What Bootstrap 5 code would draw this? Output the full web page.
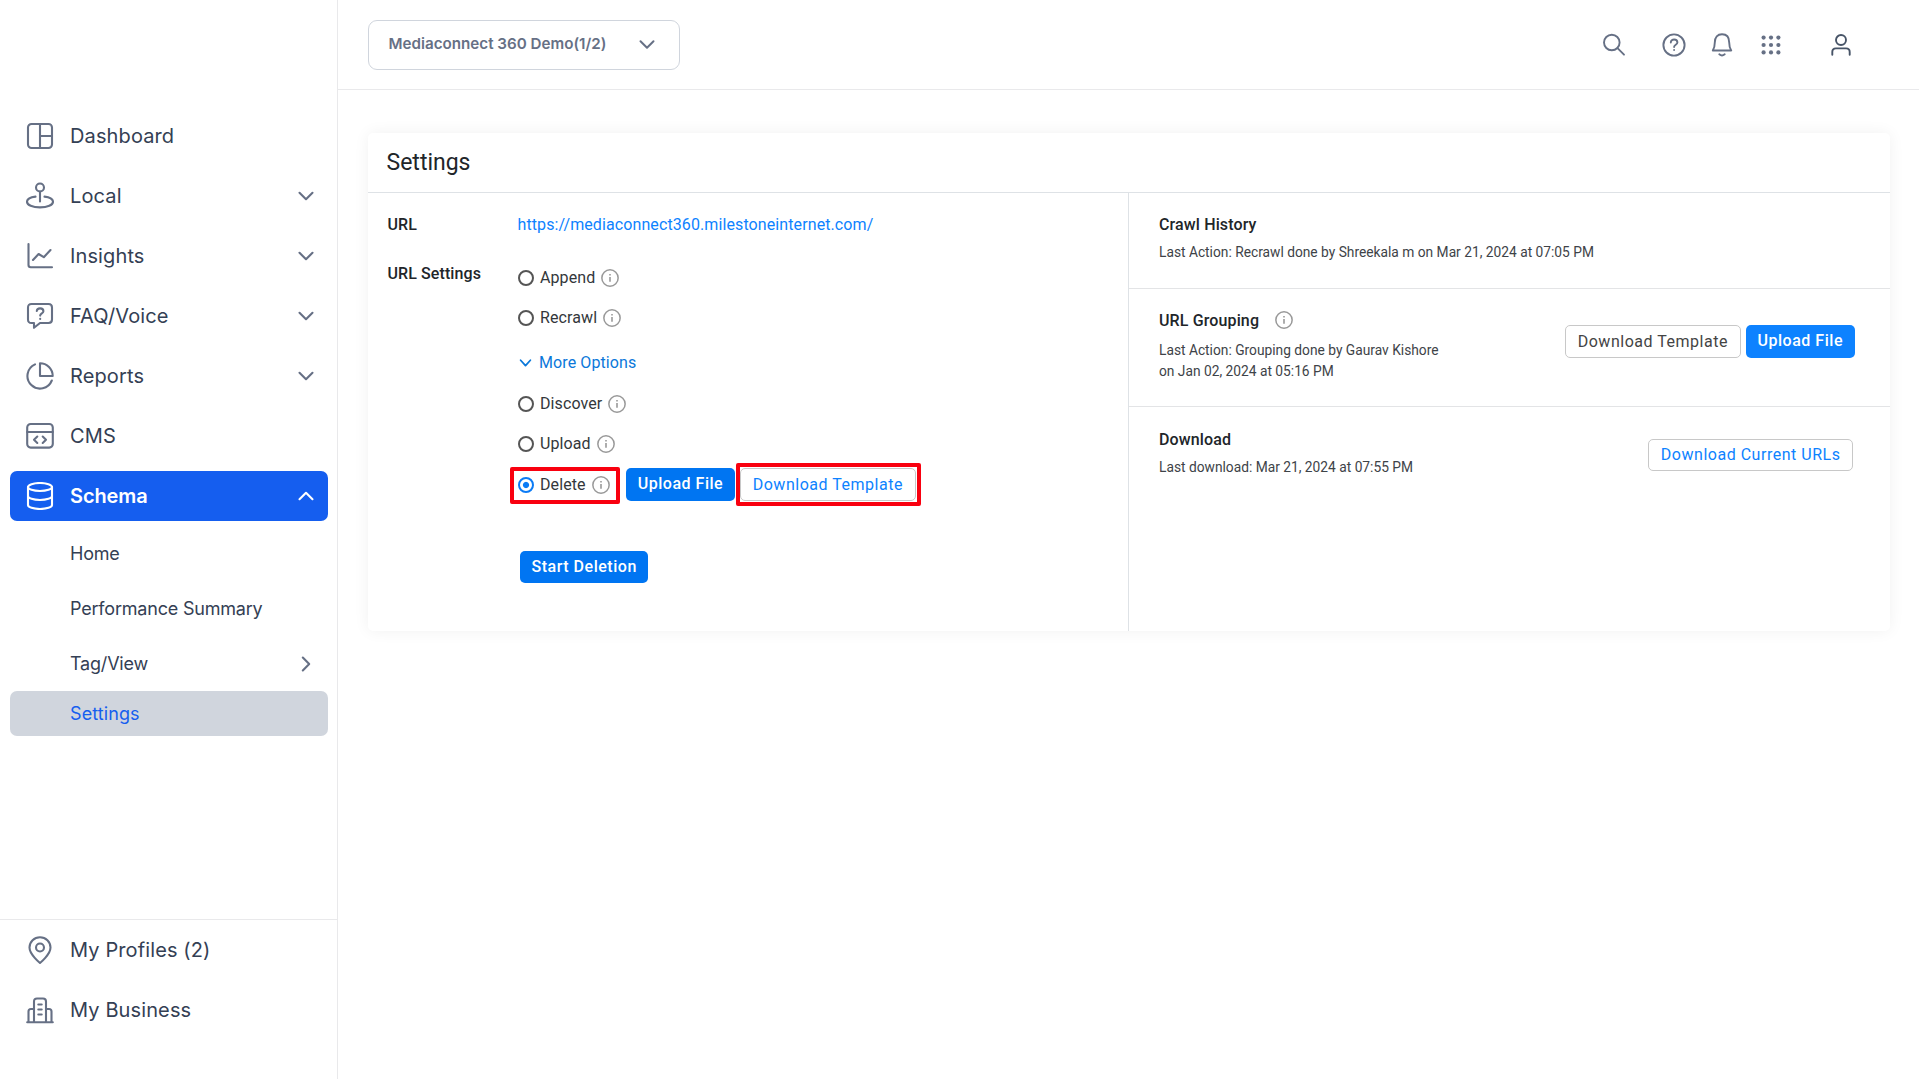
<!DOCTYPE html>
<html lang="en">
<head>
<meta charset="utf-8">
<title>Settings</title>
<link href="https://cdn.jsdelivr.net/npm/bootstrap@5.3.0/dist/css/bootstrap.min.css" rel="stylesheet">
<style>
body{height:1079px;overflow:hidden;background:#fff;font-family:Roboto,"Liberation Sans",sans-serif;color:#212529}
svg{display:block;flex:none;fill:none;stroke:currentColor;stroke-linecap:round;stroke-linejoin:round}
.side-panel{width:338px;border-right:1px solid #e9e9eb;font-family:Inter,"Liberation Sans",sans-serif}
.side-main{padding:111px 9px 0 10px;flex:1}
.side-link,.side-sub{display:flex;align-items:center;margin-bottom:10px;border-radius:7px;color:#344054;text-decoration:none;white-space:nowrap}
.side-link{height:50px;padding:0 14.500px 0 16px;font-size:20px;letter-spacing:.12px}
.side-link span{margin-left:16px;flex:1}
.side-link svg,.side-sub svg{color:#667085;stroke-width:2.1}
.side-link.active{background:#155eef;color:#fff;font-weight:600;letter-spacing:-.1px}
.side-link.active svg{color:#fff}
.side-sub{height:45px;padding:0 14.500px 0 60px;font-size:18px;letter-spacing:-.2px}
.side-sub span{flex:1}
.side-sub.active{background:#d0d5dd;color:#155eef;margin-top:-5px;letter-spacing:.1px}
.side-foot{height:160px;border-top:1px solid #e9e9eb;padding:5px 9px 0 10px}
.top-bar{height:90px;border-bottom:1px solid #e9e9eb;padding:0 66.500px 0 30px}
.picker{width:312px;height:50px;border:1px solid #d0d5dd;border-radius:9px;padding:0 20px 2px 19.500px;font:600 15.2px Inter,"Liberation Sans",sans-serif;color:#667085;background:#fff}
.top-icons{color:#667085}
.top-icons svg{width:24px;height:24px;stroke-width:1.9}
.icon-search{margin-right:36px}
.icon-bell{margin:0 25px 0 24px}
.icon-user{margin-left:46px;color:#475467}
.panel-card{margin:43px 29px 0 30px;height:498px;border-radius:5px;background:#fff;box-shadow:0 0 16px rgba(0,0,0,.06)}
.panel-head{height:60px;border-bottom:1px solid #dee2e6;padding:0 18.500px;font-size:23px;line-height:59px}
.panel-left{width:761px;border-right:1px solid #dee2e6;padding:20px 0 0 19.500px;font-size:16px;line-height:24px;letter-spacing:.1px}
.panel-right{width:761px}
.field-name{width:130px;font-weight:500}
.field-settings{margin-top:25px}
.opt-list{padding-top:4px}
.opt-row{height:24px;margin-bottom:16px;display:flex;align-items:center;color:#33373b;white-space:nowrap}
.opt-row input{appearance:none;width:16px;height:16px;border:2px solid #555;border-radius:50%;margin:0 6px 0 .5px}
.opt-row input:checked{border-color:#0b7bf5;background:radial-gradient(circle,#0b7bf5 0 2.600px,#fff 3.600px)}
.opt-more{margin:21px 0 17px;padding-left:1.500px;color:#0b78da;text-decoration:none;letter-spacing:.1px}
.opt-more svg{margin-right:7px}
.opt-delete{height:33px;margin:-4px 0 50px}
.info-dot{width:18px;height:18px;color:#999}
.opt-row .info-dot{margin-left:6px}
.blue-link{color:#0d82ff;text-decoration:none}
.act{height:33px;border-radius:5px;padding:0 11.500px;font-size:16px;line-height:31px;border:0;letter-spacing:.52px;white-space:nowrap;flex:none}
.act-fill{background:#0d82ff;color:#fff;font-weight:500;padding:0 12px 2px;line-height:29px}
.act-deep{background:#0075f2}
.act-line{border:1px solid #c8c8c8;background:#fff;color:#444}
.act-line.is-blue{color:#0d82ff}
.act-start{height:32px;margin-left:2.500px;padding:0 11.500px 2px}
.act-current{height:32px;margin:11px 2px 0 0;line-height:30px}
.act-pair{gap:5px}
.callout{position:relative}
.callout::after{content:"";position:absolute;border:4px solid #f9000f;border-radius:2px;pointer-events:none}
.callout-a::after{inset:-6px -10px -7px -8px}
.callout-b{margin-left:5px}
.callout-b::after{inset:-5px -5px -5px -4px}
.panel-sec{padding:20px 35px 0 30px}
.panel-sec + .panel-sec{border-top:1px solid #e3e4e6}
.sec-history{height:95px}
.sec-group{height:118px}
.sec-download{padding-top:21px}
.sec-name{font-weight:500;font-size:16px;line-height:24px;letter-spacing:.13px;white-space:nowrap}
.sec-name .info-dot{margin:-2px 0 0 16px}
.sec-note{font-size:13.770px;line-height:21px;margin-top:5px;color:#3e4348;white-space:nowrap}
.sec-group .sec-note{margin-top:7px}
</style>
<script src="https://cdn.jsdelivr.net/npm/bootstrap@5.3.0/dist/js/bootstrap.bundle.min.js"></script>
</head>
<body class="d-flex">
<svg width="0" height="0" class="position-absolute">
<symbol id="info" viewBox="0 0 18 18"><circle cx="9" cy="9" r="8.150" stroke-width="1.500"/><path d="M9 8v4.800M9 5v1.600" stroke-width="1.600" stroke-linecap="butt"/></symbol>
<symbol id="down" viewBox="0 0 16 16"><path d="M1.500 4.800 8 11.200l6.500-6.400"/></symbol>
</svg>
<nav class="side-panel d-flex flex-column flex-shrink-0">
<div class="side-main">
<a class="side-link" href="#"><svg width="28" height="28" viewBox="0 0 28 28"><rect x="2" y="2" width="24" height="24" rx="3.500"/><path d="M14 2v24M14 14h12"/></svg><span>Dashboard</span></a>
<a class="side-link" href="#"><svg width="28" height="28" viewBox="0 0 28 28"><circle cx="14" cy="5.500" r="4"/><path d="M14 9.500v10M9.500 14.600C4 15.300 1 17.200 1 19.800 1 23 6.500 25.400 14 25.400S27 23 27 19.800c0-2.600-3-4.500-8.500-5.200"/></svg><span>Local</span><svg width="16" height="16"><use href="#down"/></svg></a>
<a class="side-link" href="#"><svg width="28" height="28" viewBox="0 0 28 28"><path d="M2.500 2v21q0 2.200 2.200 2.200H26M7 18l5.600-6 5.200 3.200L24.500 8"/></svg><span>Insights</span><svg width="16" height="16"><use href="#down"/></svg></a>
<a class="side-link" href="#"><svg width="28" height="28" viewBox="0 0 28 28"><path d="M5.500 2h17Q26 2 26 5.500v12q0 3.500-3.500 3.500H14l-6 4.800V21H5.500Q2 21 2 17.500v-12Q2 2 5.500 2Z"/><path d="M10.800 9c.3-3.600 6.600-3.400 6.600.2 0 2.200-3.200 2.300-3.200 4.400M14.200 16.800v.1"/></svg><span>FAQ/Voice</span><svg width="16" height="16"><use href="#down"/></svg></a>
<a class="side-link" href="#"><svg width="28" height="28" viewBox="0 0 28 28"><path d="M14 1.300V14h12.700A12.700 12.700 0 0 0 14 1.300ZM9 2.400A12.600 12.600 0 1 0 25.800 18.500"/></svg><span>Reports</span><svg width="16" height="16"><use href="#down"/></svg></a>
<a class="side-link" href="#"><svg width="28" height="28" viewBox="0 0 28 28"><rect x="1.200" y="2" width="25.600" height="23.600" rx="3.500"/><path d="M1.200 10h25.600M11.300 14.500 8 17.700l3.300 3.200M16.700 14.500l3.300 3.200-3.300 3.200"/></svg><span>CMS</span></a>
<a class="side-link active" href="#"><svg width="28" height="28" viewBox="0 0 28 28"><ellipse cx="14" cy="5" rx="12" ry="4"/><path d="M2 5v18c0 2.200 5.400 4 12 4s12-1.800 12-4V5M2 14c0 2.200 5.400 4 12 4s12-1.800 12-4"/></svg><span>Schema</span><svg width="16" height="16" viewBox="0 0 16 16"><path d="M1.500 11.200 8 4.800l6.500 6.400"/></svg></a>
<a class="side-sub" href="#"><span>Home</span></a>
<a class="side-sub" href="#"><span>Performance Summary</span></a>
<a class="side-sub" href="#"><span>Tag/View</span><svg width="16" height="16" viewBox="0 0 16 16"><path d="M4.800 1.500 11.200 8l-6.400 6.500"/></svg></a>
<a class="side-sub active" href="#"><span>Settings</span></a>
</div>
<div class="side-foot">
<a class="side-link" href="#"><svg width="28" height="28" viewBox="0 0 28 28"><path d="M14 27S3.500 18.500 3.500 11.500a10.500 10.300 0 0 1 21 0C24.500 18.500 14 27 14 27Z"/><circle cx="14" cy="11.500" r="4"/></svg><span>My Profiles (2)</span></a>
<a class="side-link" href="#"><svg width="28" height="28" viewBox="0 0 28 28"><path d="M1.200 26.200h25.600M2.500 26V15.500q0-2.500 2.500-2.500h3M25.500 26V15.500q0-2.500-2.500-2.500h-3M8 26V5.500Q8 2.500 11 2.500h6q3 0 3 3V26M12.300 8.500h3.400M12.300 13.500h3.400M12.300 18.500h3.400"/></svg><span>My Business</span></a>
</div>
</nav>
<main class="flex-grow-1">
<header class="top-bar d-flex align-items-center justify-content-between">
<button class="picker d-flex align-items-center justify-content-between" type="button"><span>Mediaconnect 360 Demo(1/2)</span><svg width="24" height="24" viewBox="-4 -4.500 24 24" stroke-width="2"><path d="M1.500 4.800 8 11.200l6.500-6.400"/></svg></button>
<div class="top-icons d-flex align-items-center">
<svg class="icon-search" viewBox="0 0 24 24"><circle cx="9.800" cy="9.500" r="7.800"/><path d="m15.500 15.200 6.500 6.500"/></svg>
<svg viewBox="0 0 24 24"><circle cx="12" cy="12" r="10.600"/><path d="M8.800 9.600c0-4.200 6.600-4 6.600-.1 0 2.300-3.300 2.300-3.300 4.500M12.100 17v.1"/></svg>
<svg class="icon-bell" viewBox="0 0 24 24"><path d="M2.800 17.500c1.500-2.500 2-5 2-8C4.800 4 7.600 1.300 12 1.300s7.200 2.700 7.200 8.200c0 3 .5 5.500 2 8ZM9.300 21.300q2.700 2.200 5.400 0"/></svg>
<svg viewBox="0 0 24 24"><g fill="currentColor" stroke="none"><circle cx="4.600" cy="4.600" r="2.100"/><circle cx="12" cy="4.600" r="2.100"/><circle cx="19.400" cy="4.600" r="2.100"/><circle cx="4.600" cy="12" r="2.100"/><circle cx="12" cy="12" r="2.100"/><circle cx="19.400" cy="12" r="2.100"/><circle cx="4.600" cy="19.400" r="2.100"/><circle cx="12" cy="19.400" r="2.100"/><circle cx="19.400" cy="19.400" r="2.100"/></g></svg>
<svg class="icon-user" viewBox="0 0 24 24"><circle cx="12" cy="7" r="5"/><path d="M3.300 21.800V19q0-3.600 3.600-3.600h10.200q3.600 0 3.600 3.600v2.800"/></svg>
</div>
</header>
<section class="panel-card d-flex flex-column">
<div class="panel-head">Settings</div>
<div class="d-flex flex-grow-1">
<div class="panel-left">
<div class="d-flex"><div class="field-name">URL</div><a class="blue-link" href="#">https://mediaconnect360.milestoneinternet.com/</a></div>
<div class="field-settings d-flex">
<div class="field-name">URL Settings</div>
<div class="opt-list">
<label class="opt-row"><input type="radio" name="mode">Append<svg class="info-dot"><use href="#info"/></svg></label>
<label class="opt-row"><input type="radio" name="mode">Recrawl<svg class="info-dot"><use href="#info"/></svg></label>
<a class="opt-row opt-more" href="#"><svg width="13" height="13" viewBox="0 0 16 16" stroke-width="2.200"><path d="M2 4 8 10.500 14 4"/></svg>More Options</a>
<label class="opt-row"><input type="radio" name="mode">Discover<svg class="info-dot"><use href="#info"/></svg></label>
<label class="opt-row"><input type="radio" name="mode">Upload<svg class="info-dot"><use href="#info"/></svg></label>
<div class="opt-row opt-delete">
<label class="opt-row callout callout-a mb-0"><input type="radio" name="mode" checked>Delete<svg class="info-dot"><use href="#info"/></svg></label>
<button class="act act-fill act-deep ms-3" type="button">Upload File</button>
<span class="callout callout-b d-flex"><button class="act act-line is-blue" type="button">Download Template</button></span>
</div>
<button class="act act-fill act-deep act-start" type="button">Start Deletion</button>
</div>
</div>
</div>
<div class="panel-right">
<div class="panel-sec sec-history">
<div class="sec-name">Crawl History</div>
<div class="sec-note">Last Action: Recrawl done by Shreekala m on Mar 21, 2024 at 07:05 PM</div>
</div>
<div class="panel-sec sec-group d-flex justify-content-between">
<div>
<div class="sec-name d-flex align-items-center">URL Grouping<svg class="info-dot"><use href="#info"/></svg></div>
<div class="sec-note">Last Action: Grouping done by Gaurav Kishore<br>on Jan 02, 2024 at 05:16 PM</div>
</div>
<div class="act-pair d-flex pt-3"><button class="act act-line" type="button">Download Template</button><button class="act act-fill" type="button">Upload File</button></div>
</div>
<div class="panel-sec sec-download d-flex justify-content-between">
<div>
<div class="sec-name">Download</div>
<div class="sec-note">Last download: Mar 21, 2024 at 07:55 PM</div>
</div>
<button class="act act-line is-blue act-current" type="button">Download Current URLs</button>
</div>
</div>
</div>
</section>
</main>
</body>
</html>
